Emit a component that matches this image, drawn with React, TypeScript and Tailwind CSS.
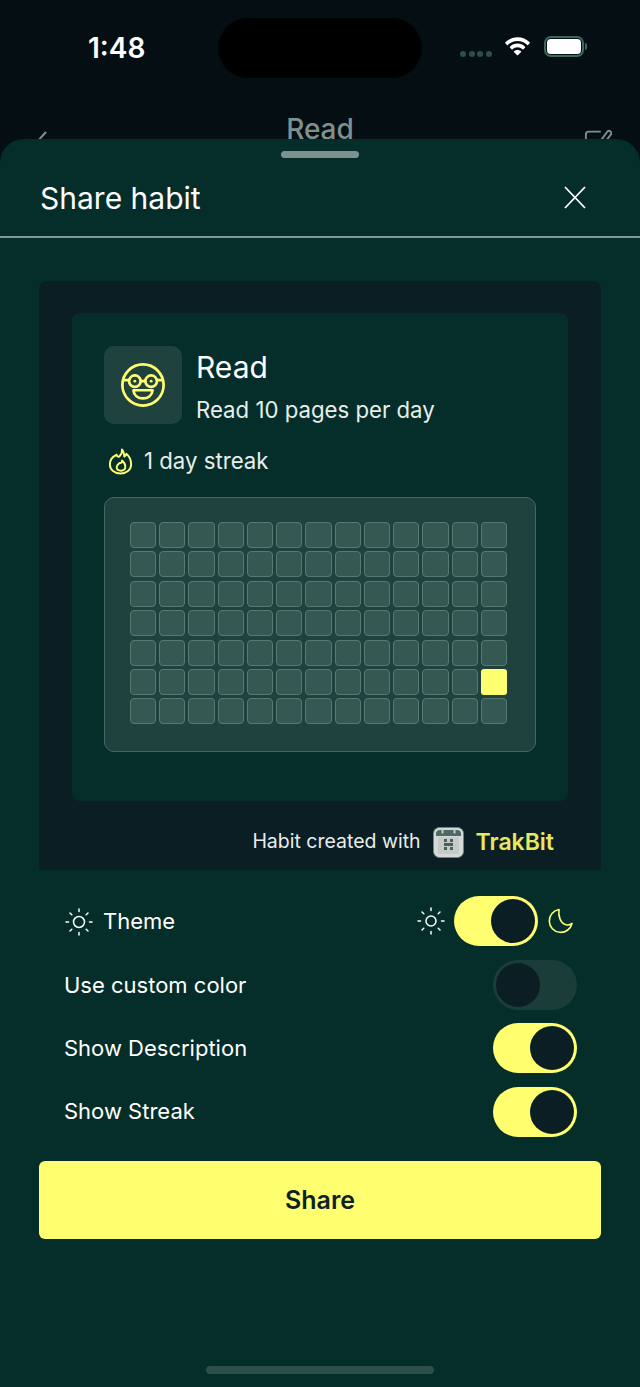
const CELL_ROWS = 7;
const CELL_COLS = 13;

const Toggle = ({ on, className = '' }: { on: boolean; className?: string }) => (
  <div
    className={`flex h-[50px] w-[84px] shrink-0 items-center rounded-full px-[3px] ${
      on ? 'justify-end bg-[#ffff70]' : 'justify-start bg-[#1b3d3a]'
    } ${className}`}
  >
    <div className="h-11 w-11 rounded-full bg-[#0b1e24]" />
  </div>
);

const SunIcon = ({ size = 30, color = '#ffffff', r = 5.5 }: { size?: number; color?: string; r?: number }) => (
  <svg width={size} height={size} viewBox="0 0 30 30" fill="none" stroke={color} strokeWidth="1.5" strokeLinecap="round">
    <circle cx="15" cy="15" r={r} />
    <path d="M15 2v2.500M15 25.500v2.500M2 15h2.500M25.500 15h2.500M6 6l1.800 1.800M22.200 22.200l1.800 1.800M6 24l1.800-1.800M22.200 7.800l1.800-1.800" />
  </svg>
);

const SettingRow = ({ label, on }: { label: string; on: boolean }) => (
  <div className="flex h-[63.4px] items-center justify-between pl-[64px] pr-[63px]">
    <span className="text-[22px] text-white">{label}</span>
    <Toggle on={on} />
  </div>
);

const App = () => {
  return (
    <div className="flex h-[1387px] w-[640px] flex-col overflow-hidden bg-[#050f13] font-['Inter',sans-serif]">
      {/* Status bar + page header behind the sheet */}
      <div className="relative h-[139px] shrink-0 overflow-hidden">
        <div className="flex h-[96px] items-start justify-between pl-[88px] pr-[53px] pt-[32px]">
          <span className="text-[28px] font-semibold leading-8 text-white">1:48</span>
          <div className="flex items-center pt-[4px]">
            <div className="mr-[12px] mt-[14px] flex gap-[2.700px]">
              <div className="h-[6px] w-[6px] rounded-full bg-[#2c4f4a]" />
              <div className="h-[6px] w-[6px] rounded-full bg-[#2c4f4a]" />
              <div className="h-[6px] w-[6px] rounded-full bg-[#2c4f4a]" />
              <div className="h-[6px] w-[6px] rounded-full bg-[#2c4f4a]" />
            </div>
            <svg width="27" height="21" viewBox="0 1 28 21" fill="#ffffff">
              <path d="M14 2C9 2 4.6 4 1.4 7.2c-.3.3-.3.7 0 1l1.6 1.7c.3.3.7.3 1 0C6.600 7.300 10.100 5.700 14 5.700s7.400 1.600 10 4.200c.3.3.7.3 1 0l1.600-1.700c.3-.3.3-.7 0-1C23.400 4 19 2 14 2z" />
              <path d="M14 8.500c-3 0-5.800 1.200-7.800 3.200-.3.3-.3.7 0 1l1.700 1.700c.3.3.7.3 1 0 1.300-1.300 3.100-2.100 5.100-2.100s3.800.8 5.100 2.100c.3.3.7.3 1 0l1.700-1.700c.3-.3.3-.7 0-1-2-2-4.800-3.200-7.800-3.200z" />
              <path d="M14 15c-1.500 0-2.800.6-3.700 1.500-.2.2-.2.6 0 .8l3.300 3.400c.2.2.6.2.8 0l3.300-3.400c.2-.2.2-.6 0-.8-.9-.9-2.200-1.500-3.700-1.500z" />
            </svg>
            <div className="ml-[13px] flex items-center">
              <div className="flex h-[21px] w-[40px] items-center rounded-[7px] border-2 border-[#3f6660] p-[1px]">
                <div className="h-full w-full rounded-[4px] bg-white" />
              </div>
              <div className="ml-[1px] h-[7px] w-[2px] rounded-r-full bg-[#3f6660]" />
            </div>
          </div>
        </div>
        {/* Dynamic island */}
        <div className="absolute left-[218px] top-[18px] h-[60px] w-[204px] rounded-full bg-black" />
        <div className="flex items-start justify-between pl-[35px] pr-[28px] pt-[33px]">
          <svg width="14" height="24" viewBox="0 0 14 24" fill="none" stroke="#7f918e" strokeWidth="2">
            <path d="M11 3L1 14l10 11" />
          </svg>
          <svg width="28" height="24" viewBox="0 0 30 24" fill="none" stroke="#7f918e" strokeWidth="2" className="-mt-[1px]">
            <path d="M18 3H5a3 3 0 0 0-3 3v16M14 18L25 3c2-2 5 0 4 3L18 20" />
          </svg>
        </div>
        <div className="absolute left-0 right-0 top-[112px] text-center text-[28px] font-medium leading-[34px] text-[#7f918e]">
          Read
        </div>
      </div>

      {/* Sheet */}
      <div className="flex flex-1 flex-col rounded-t-[24px] bg-[#052e2b]">
        <div className="mx-auto mt-3 h-[7px] w-[78px] rounded-full bg-[#7f918e]" />
        <div className="flex h-[80px] items-center justify-between border-b-2 border-[#7d9a94] pl-10 pr-[53px]">
          <span className="mt-[2px] text-[30px] leading-9 text-white">Share habit</span>
          <svg width="24" height="24" viewBox="0 0 24 24" fill="none" stroke="#ffffff" strokeWidth="1.8">
            <path d="M2 2l20 21M22 2L2 23" />
          </svg>
        </div>

        {/* Share card preview */}
        <div className="mx-[39px] mt-[43px] rounded-t-[8px] bg-[#0b1e24] px-[33px] pt-[32px]">
          <div className="h-[488px] rounded-[8px] bg-[#052e2b] px-[32px] pt-[33px]">
            <div className="flex items-start gap-[14px]">
              <div className="flex h-[78px] w-[78px] items-center justify-center rounded-[10px] bg-[#1f423f]">
                <svg width="46" height="46" viewBox="0 0 48 48" fill="none" stroke="#ffff70" strokeWidth="2.8" strokeLinejoin="round">
                  <circle cx="24" cy="24" r="21.500" />
                  <circle cx="15.500" cy="20" r="6" />
                  <circle cx="32.500" cy="20" r="6" />
                  <circle cx="15.500" cy="20" r="1.500" fill="#ffff70" stroke="none" />
                  <circle cx="32.500" cy="20" r="1.500" fill="#ffff70" stroke="none" />
                  <path d="M21.500 20h5M3 19h6.500M38.500 19h6.500" />
                  <path d="M14 29.500h20c-.5 5-4.500 8.500-10 8.500s-9.500-3.500-10-8.500z" />
                </svg>
              </div>
              <div className="pt-[3px]">
                <div className="text-[30px] leading-[36px] text-white">Read</div>
                <div className="mt-[12px] text-[22.200px] leading-[26px] text-[#e8eeec]">Read 10 pages per day</div>
              </div>
            </div>

            <div className="ml-[3px] mt-[21px] flex h-[32px] items-center gap-[10px]">
              <svg width="27" height="27" viewBox="0 0 27 28" fill="none" stroke="#ffff70" strokeWidth="2" strokeLinejoin="round">
                <path d="M15 1.500c.5 3-.5 5-2.500 7-1 1-2.500.8-3-1.500C5 9 2.500 12.500 2.500 17c0 5.500 5 9.500 11 9.500s11-4 11-9.500c0-5-2.500-9-5-11-.3 1.500-1 2.500-2 3-.3-3-.5-5.500-2.500-7.500z" />
                <path d="M15 13c.3 2-1 3-2.500 2.500-1.500 1.200-3 2.500-3 4.500 0 2.500 2 3.500 4.500 3.500s4.500-1.500 4.500-4c0-2.500-1.500-4.800-3.500-6.500z" />
              </svg>
              <span className="text-[22.200px] text-[#e8eeec]">1 day streak</span>
            </div>

            {/* Habit grid */}
            <div className="mt-[20px] grid h-[255px] grid-cols-[repeat(13,26.200px)] content-start justify-between gap-y-[3.400px] rounded-[10px] border border-[#47665f] bg-[#1f423f] pl-[25px] pr-[28px] pt-[24px]">
              {Array.from({ length: CELL_ROWS * CELL_COLS }, (_, i) =>
                i === 5 * CELL_COLS + 12 ? (
                  <div key={i} className="h-[26px] rounded-[3px] bg-[#ffff70]" />
                ) : (
                  <div key={i} className="h-[26px] rounded-[4px] border border-[#557a72] bg-[#365852]" />
                ),
              )}
            </div>
          </div>

          <div className="flex h-[69px] items-center justify-end gap-[12px] pr-[14px] pt-[13px]">
            <span className="text-[19.500px] text-[#e8eeec]">Habit created with</span>
            <svg width="31" height="31" viewBox="0 0 31 31">
              <rect x="0.500" y="0.500" width="30" height="30" rx="6" fill="#d5dad8" stroke="#6f8582" />
              <path d="M3 9V7a4 4 0 0 1 4-4h17a4 4 0 0 1 4 4v2z" fill="#4a6a66" />
              <rect x="5" y="10" width="21" height="17" fill="#c6cbc9" />
              <rect x="8.500" y="1.500" width="2" height="5" fill="#c6cbc9" />
              <rect x="20.500" y="1.500" width="2" height="5" fill="#c6cbc9" />
              <rect x="11" y="12" width="3" height="3" fill="#48605c" />
              <rect x="17" y="12" width="3" height="3" fill="#48605c" />
              <rect x="11" y="16" width="9" height="3" fill="#48605c" />
              <rect x="11" y="20" width="3" height="3" fill="#48605c" />
              <rect x="17" y="20" width="3" height="3" fill="#48605c" />
            </svg>
            <span className="text-[23px] font-semibold text-[#e7e85f]">TrakBit</span>
          </div>
        </div>

        {/* Options */}
        <div className="mt-[20px]">
          <div className="flex h-[63.400px] items-center justify-between pl-[64px] pr-[66px]">
            <div className="flex items-center gap-[9px]">
              <SunIcon />
              <span className="text-[22px] text-white">Theme</span>
            </div>
            <div className="-mt-[1px] flex items-center gap-[8px]">
              <SunIcon r={5} />
              <Toggle on />
              <svg width="28" height="28" viewBox="0 0 28 28" fill="none" stroke="#ffff70" strokeWidth="1.600" strokeLinejoin="round">
                <path d="M13 2.500A11.500 11.500 0 1 0 26 16.500c-2 1.500-4 1.800-6 1.300-5.500-1.500-8-8.500-7-15.300z" />
              </svg>
            </div>
          </div>
          <SettingRow label="Use custom color" on={false} />
          <SettingRow label="Show Description" on />
          <SettingRow label="Show Streak" on />
        </div>

        <div className="mx-[39px] mt-[17px] flex h-[78px] items-center justify-center rounded-[6px] bg-[#ffff70] pt-[2px] text-[25px] font-semibold text-[#0b2228]">
          Share
        </div>

        <div className="mx-auto mt-[127px] h-[8px] w-[228px] rounded-full bg-[#2c4f4a]" />
      </div>
    </div>
  );
};

export default App;
